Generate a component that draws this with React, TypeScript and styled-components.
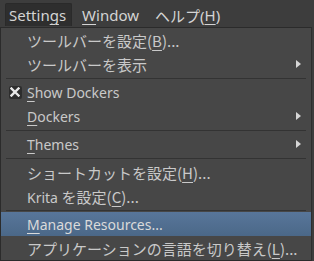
import React from 'react'
import styled, { createGlobalStyle } from 'styled-components'

const GlobalStyle = createGlobalStyle`
    html, body {
        margin: 0;
        padding: 0;
        background: #3d3d3d;
        width: 314px;
        height: 261px;
        overflow: hidden;
    }
    body {
        font-family: 'Noto Sans', 'Noto Sans CJK JP', sans-serif;
        font-size: 14px;
        color: #cfcfcf;
    }
`

type Item =
    | { kind: 'sep' }
    | {
          kind: 'item'
          label: React.ReactNode
          checked?: boolean
          submenu?: boolean
          active?: boolean
      }

const U = styled.span`
    text-decoration: underline;
    text-underline-offset: 3px;
    text-decoration-thickness: 1px;
`

// Japanese runs are set a touch larger than the latin text
const Jp = styled.span`
    font-family: 'Noto Sans CJK JP', sans-serif;
    font-size: 15px;
`

const items: Item[] = [
    { kind: 'item', label: <Jp>ツールバーを設定(<U>B</U>)...</Jp> },
    { kind: 'item', label: <Jp>ツールバーを表示</Jp>, submenu: true },
    { kind: 'sep' },
    { kind: 'item', label: <><U>S</U>how Dockers</>, checked: true },
    { kind: 'item', label: <><U>D</U>ockers</>, submenu: true },
    { kind: 'sep' },
    { kind: 'item', label: <><U>T</U>hemes</>, submenu: true },
    { kind: 'sep' },
    { kind: 'item', label: <Jp>ショートカットを設定(<U>H</U>)...</Jp> },
    { kind: 'item', label: <>Krita <Jp>を設定(<U>C</U>)...</Jp></> },
    { kind: 'sep' },
    { kind: 'item', label: <><U>M</U>anage Resources...</>, active: true },
    { kind: 'item', label: <Jp>アプリケーションの言語を切り替え(<U>L</U>)...</Jp> },
]

const App: React.FunctionComponent = () => {
    return (
        <>
            <GlobalStyle />
            <MenuBar>
                <BarItem open>
                    Settin<U>g</U>s
                </BarItem>
                <BarItem>
                    <U>W</U>indow
                </BarItem>
                <BarItem>
                    ヘルプ(<U>H</U>)
                </BarItem>
            </MenuBar>
            <Popup>
                {items.map((item, i) =>
                    item.kind === 'sep' ? (
                        <Separator key={i} />
                    ) : (
                        <Row key={i} active={item.active}>
                            <CheckCell>
                                {item.checked && (
                                    <CheckBox>
                                        <svg width="10" height="10" viewBox="0 0 10 10">
                                            <path
                                                d="M1.5 1.5 L8.5 8.5 M8.5 1.5 L1.5 8.5"
                                                stroke="#e8e8e8"
                                                strokeWidth="2.4"
                                                strokeLinecap="square"
                                            />
                                        </svg>
                                    </CheckBox>
                                )}
                            </CheckCell>
                            <Label>{item.label}</Label>
                            {item.submenu && (
                                <Arrow>
                                    <svg width="5" height="8" viewBox="0 0 5 8">
                                        <path d="M0 0 L5 4 L0 8 Z" fill="#d6d6d6" />
                                    </svg>
                                </Arrow>
                            )}
                        </Row>
                    )
                )}
            </Popup>
        </>
    )
}

const MenuBar = styled.div`
    display: flex;
    align-items: flex-end;
    height: 26px;
    padding-left: 5px;
    gap: 6px;
    background: #3d3d3d;
    font-size: 15px;
`

const BarItem = styled.div<{ open?: boolean }>`
    height: 23px;
    box-sizing: border-box;
    padding: 0 5px 0 3px;
    display: flex;
    align-items: center;
    color: #d4d4d4;
    background: ${(p) => (p.open ? '#2e2e2e' : 'transparent')};
    border: 1px solid ${(p) => (p.open ? '#2a2a2a' : 'transparent')};
    border-bottom: none;
    border-radius: 2px 2px 0 0;
`

const Popup = styled.div`
    width: 312px;
    box-sizing: border-box;
    margin-top: 1px;
    background: #474747;
    border: 1px solid #2b2b2b;
    border-right-color: #2e2e2e;
    padding: 0;
`

const Row = styled.div<{ active?: boolean }>`
    display: flex;
    align-items: center;
    height: 24px;
    color: ${(p) => (p.active ? '#dadada' : '#c9c9c9')};
    background: ${(p) =>
        p.active ? 'linear-gradient(#58769a, #4b6888)' : 'transparent'};
`

const CheckCell = styled.div`
    width: 26px;
    display: flex;
    justify-content: center;
    align-items: center;
`

const CheckBox = styled.div`
    width: 13px;
    height: 13px;
    margin-left: 2px;
    background: #2d2d2d;
    border-radius: 2px;
    display: flex;
    align-items: center;
    justify-content: center;
`

const Label = styled.div`
    flex: 1;
    white-space: nowrap;
`

const Arrow = styled.div`
    width: 15px;
    display: flex;
    align-items: center;
`

const Separator = styled.div`
    height: 4px;
    display: flex;
    align-items: center;
    padding: 0 5px;

    &::after {
        content: '';
        flex: 1;
        height: 1px;
        background: #333333;
    }
`

export default App
